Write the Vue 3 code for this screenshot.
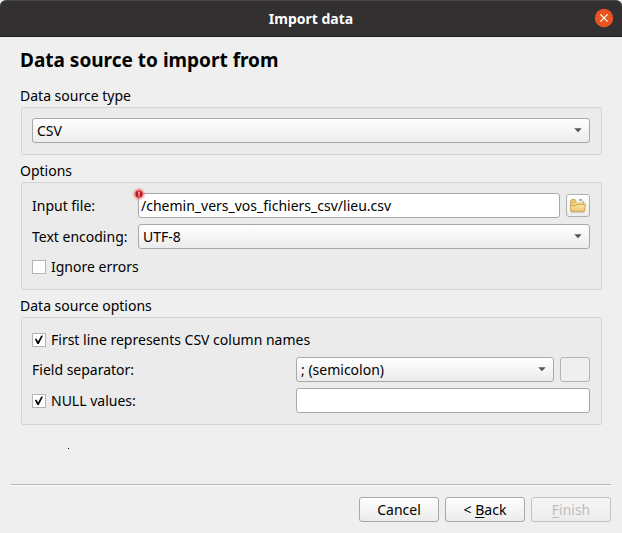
<script setup>
import { ref } from 'vue'

const sourceType = ref('CSV')
const inputFile = ref('/chemin_vers_vos_fichiers_csv/lieu.csv')
const encoding = ref('UTF-8')
const ignoreErrors = ref(false)
const firstLine = ref(true)
const separator = ref('; (semicolon)')
const useNull = ref(true)
const nullValue = ref('')
</script>

<template>
  <div class="dialog">
    <header class="titlebar">
      <span class="title">Import data</span>
      <button class="close" type="button" aria-label="Close">
        <svg width="20" height="20" viewBox="0 0 20 20">
          <circle cx="10" cy="10" r="9.2" fill="#e95420" />
          <path d="M6.4 6.4 13.6 13.6M13.6 6.4 6.4 13.6" stroke="#fff" stroke-width="1.3" />
        </svg>
      </button>
    </header>

    <main class="content">
      <h1>Data source to import from</h1>

      <section class="group">
        <label class="caption" for="type">Data source type</label>
        <div class="panel">
          <div class="combo">
            <select id="type" v-model="sourceType"><option>CSV</option></select>
            <svg class="arrow" width="8" height="5" viewBox="0 0 8 5"><path d="M0.3 0.3H7.7L4 4.3Z" /></svg>
          </div>
        </div>
      </section>

      <section class="group">
        <h2 class="caption">Options</h2>
        <div class="panel">
          <div class="row">
            <label class="name" for="file">Input file:</label>
            <div class="field">
              <input id="file" v-model="inputFile" class="text" type="text" />
              <svg class="error" width="16" height="16" viewBox="0 0 16 16">
                <defs>
                  <radialGradient id="glow">
                    <stop offset="0.4" stop-color="#f03030" stop-opacity="0.7" />
                    <stop offset="1" stop-color="#ff6060" stop-opacity="0" />
                  </radialGradient>
                </defs>
                <circle cx="8" cy="8" r="7" fill="url(#glow)" />
                <circle cx="8" cy="8" r="3.6" fill="#c01822" />
                <path d="M8 5.6V8.4M8 9.2V10.4" stroke="#fff" stroke-width="1.2" />
              </svg>
            </div>
            <button class="browse" type="button" aria-label="Browse">
              <svg width="18" height="16" viewBox="0 0 18 16">
                <defs>
                  <linearGradient id="front" x1="0" y1="0" x2="0" y2="1">
                    <stop offset="0" stop-color="#fbe9a8" />
                    <stop offset="1" stop-color="#e8c26c" />
                  </linearGradient>
                </defs>
                <path d="M2 14.5H15.5" stroke="#000" stroke-opacity="0.12" stroke-width="1.5" />
                <path d="M1.5 13V2.5L2.5 1.5H6L7.5 3H14L15 4V12Z" fill="#e6c272" stroke="#cba355" stroke-width="0.8" />
                <path d="M7.5 1.5H13.5V4.5H7.5Z" fill="#f8f8f4" />
                <path d="M10 2H13" stroke="#37aee8" stroke-width="1.4" />
                <path d="M2.5 6.5 3.5 5.5H8L9.5 4.5H14V7H2.5Z" fill="#efd48a" />
                <path d="M1.3 7.5H7L8.5 6.5H16.5L15.3 13.5H2Z" fill="url(#front)" stroke="#c9a04c" stroke-width="0.8" stroke-linejoin="round" />
              </svg>
            </button>
          </div>
          <div class="row">
            <label class="name" for="enc">Text encoding:</label>
            <div class="combo">
              <select id="enc" v-model="encoding"><option>UTF-8</option></select>
              <svg class="arrow" width="8" height="5" viewBox="0 0 8 5"><path d="M0.3 0.3H7.7L4 4.3Z" /></svg>
            </div>
          </div>
          <label class="check"><input v-model="ignoreErrors" type="checkbox" />Ignore errors</label>
        </div>
      </section>

      <section class="group">
        <h2 class="caption">Data source options</h2>
        <div class="panel">
          <label class="check"><input v-model="firstLine" type="checkbox" />First line represents CSV column names</label>
          <div class="split">
            <label for="sep">Field separator:</label>
            <div class="pair">
              <div class="combo">
                <select id="sep" v-model="separator"><option>; (semicolon)</option></select>
                <svg class="arrow" width="8" height="5" viewBox="0 0 8 5"><path d="M0.3 0.3H7.7L4 4.3Z" /></svg>
              </div>
              <input class="text custom" type="text" aria-label="Custom separator" disabled />
            </div>
          </div>
          <div class="split">
            <label class="check"><input v-model="useNull" type="checkbox" />NULL values:</label>
            <input v-model="nullValue" class="text" type="text" aria-label="NULL value" />
          </div>
        </div>
      </section>

      <div class="speck"></div>
    </main>

    <footer class="actions">
      <button class="btn" type="button">Cancel</button>
      <button class="btn" type="button">&lt; <u>B</u>ack</button>
      <button class="btn" type="button" disabled><u>F</u>inish</button>
    </footer>
  </div>
</template>

<style>
body {
  margin: 0;
  background: #efefef;
}
</style>

<style scoped>
* {
  box-sizing: border-box;
}
.dialog {
  display: flex;
  flex-direction: column;
  min-height: 100vh;
  background: #efefef;
  color: #000;
  font: 14px/20px "Noto Sans", "Open Sans", sans-serif;
}
button, input, select {
  font: inherit;
  color: inherit;
  margin: 0;
}
.titlebar {
  display: grid;
  grid-template-columns: 1fr auto 1fr;
  align-items: center;
  height: 37px;
  padding: 0 8px;
  background: #323030;
  border-top: 1px solid #484646;
  border-bottom: 1px solid #1c1b1b;
  border-radius: 6px 6px 0 0;
}
.title {
  grid-column: 2;
  color: #fff;
  font-size: 14px;
  font-weight: 700;
}
.close {
  justify-self: end;
  display: flex;
  padding: 0 0 1px;
  border: 0;
  background: none;
}
.content {
  flex: 1;
  display: flex;
  flex-direction: column;
  gap: 7px;
  padding: 10px 20px 0;
}
h1 {
  margin: 0 0 6px;
  font-size: 19px;
  line-height: 27px;
  font-weight: 700;
}
.caption {
  display: block;
  margin: 0;
  padding-bottom: 2px;
  font-size: 14px;
  line-height: 18px;
  font-weight: 400;
}
.panel {
  display: flex;
  flex-direction: column;
  gap: 6px;
  margin: 0 0 0 1px;
  padding: 10px 11px 11px 10px;
  border: 1px solid #d4d4d4;
  border-radius: 2px;
  background: #ebebeb;
}
.row {
  display: grid;
  grid-template-columns: 100px 1fr auto;
  column-gap: 6px;
  align-items: center;
}
.row .combo {
  grid-column: 2 / 4;
}
.name {
  white-space: nowrap;
}
.split {
  display: grid;
  grid-template-columns: 258px 1fr;
  column-gap: 6px;
  align-items: center;
}
.pair {
  display: grid;
  grid-template-columns: 1fr 30px;
  column-gap: 6px;
}
.field, .combo {
  position: relative;
}
.combo {
  display: flex;
}
select, .text {
  display: block;
  width: 100%;
  height: 25px;
  border: 1px solid #a8a8a8;
  border-radius: 3px;
  outline: 0;
}
select {
  appearance: none;
  padding: 0 24px 0 4px;
  background: linear-gradient(#fff, #ebebeb);
}
.text {
  padding: 0 2px;
  background: #fff;
}
.text:disabled {
  background: #efefef;
  border-color: #b4b4b4;
}
.arrow {
  position: absolute;
  right: 8px;
  top: 10px;
  fill: #555;
  pointer-events: none;
}
.error {
  position: absolute;
  left: -7px;
  top: -7px;
}
.browse {
  display: flex;
  align-items: center;
  justify-content: center;
  width: 24px;
  height: 23px;
  padding: 0;
  border: 1px solid #b0b0b0;
  border-radius: 3px;
  background: linear-gradient(#fff, #ededed);
}
.check {
  display: flex;
  align-items: center;
  gap: 5px;
  height: 23px;
}
.check input {
  appearance: none;
  width: 14px;
  height: 14px;
  border: 1px solid #b4b4b4;
  background: #fff;
}
.check input:checked::before {
  content: "";
  display: block;
  width: 12px;
  height: 12px;
  background: #000;
  clip-path: polygon(16% 48%, 28% 42%, 42% 66%, 68% 18%, 84% 16%, 48% 88%, 36% 88%);
}
.speck {
  width: 1px;
  height: 1px;
  margin: 16px 0 0 48px;
  background: #000;
}
.actions {
  display: flex;
  justify-content: flex-end;
  gap: 6px;
  margin: 0 11px;
  padding: 12px 0 11px;
  border-top: 1px solid #b4b4b4;
  box-shadow: inset 0 1px #fff;
}
.btn {
  width: 80px;
  height: 25px;
  padding: 0;
  border: 1px solid #a8a8a8;
  border-radius: 3px;
  background: linear-gradient(#fff, #ebebeb);
}
.btn u {
  text-underline-offset: 2px;
  text-decoration-thickness: 1px;
}
.btn:disabled {
  color: #bebebe;
  border-color: #c2c2c2;
  background: linear-gradient(#f6f6f6, #ececec);
}
</style>
